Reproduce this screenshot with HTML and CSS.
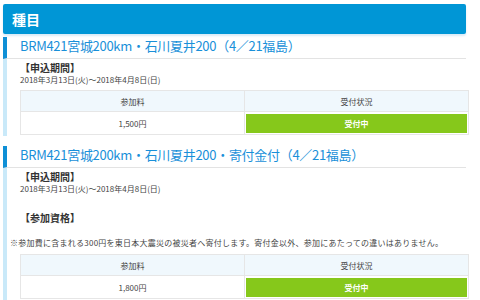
FILE: index.html
```html
<!DOCTYPE html>
<html lang="ja">
<head>
  <meta charset="UTF-8">
  <title>種目</title>
  <link rel="stylesheet" href="styles.css">
</head>
<body>
  <div class="page">
    <h1 class="box-title">種目</h1>

    <div class="event">
      <h2 class="event-name">BRM421宮城200km・石川夏井200（4／21福島）</h2>
      <div class="event-body">
        <p class="label">【申込期間】</p>
        <p class="period">2018年3月13日(火)～2018年4月8日(日)</p>
        <table class="fee">
          <tr><th>参加料</th><th>受付状況</th></tr>
          <tr><td>1,500円</td><td class="status"><span>受付中</span></td></tr>
        </table>
      </div>
    </div>

    <div class="event">
      <h2 class="event-name">BRM421宮城200km・石川夏井200・寄付金付（4／21福島）</h2>
      <div class="event-body">
        <p class="label">【申込期間】</p>
        <p class="period">2018年3月13日(火)～2018年4月8日(日)</p>
        <p class="label label-gap">【参加資格】</p>
        <p class="note">※参加費に含まれる300円を東日本大震災の被災者へ寄付します。寄付金以外、参加にあたっての違いはありません。</p>
        <table class="fee">
          <tr><th>参加料</th><th>受付状況</th></tr>
          <tr><td>1,800円</td><td class="status"><span>受付中</span></td></tr>
        </table>
      </div>
    </div>
  </div>
</body>
</html>
```

FILE: styles.css
```css
body {
  margin: 0;
  font-family: "Noto Sans CJK JP", "Noto Sans", sans-serif;
  background-color: #fff;
  color: #333;
}

p {
  margin: 0;
}

.page {
  padding: 4px 14px 0 3px;
}

.box-title {
  margin: 0;
  height: 30px;
  line-height: 30px;
  padding-left: 9px;
  background-color: #0096d6;
  color: #fff;
  font-size: 14px;
  font-weight: bold;
  border-radius: 2px;
  box-shadow: 0 2px 2px rgba(0, 120, 200, 0.15);
}

.event {
  margin-top: 3px;
  border-left: 4px solid #c9e9f9;
  margin-right: -3px;
}

.event + .event {
  margin-top: 10px;
}

.event-name {
  margin: 0 3px 0 -4px;
  padding: 0 0 4px 13px;
  border-left: 4px solid #0e8fd6;
  border-bottom: 1px solid #e3e3e3;
  color: #1990d9;
  font-size: 13px;
  font-weight: normal;
  line-height: 17px;
  letter-spacing: -0.3px;
}

.event-body {
  padding: 3px 0 1px 13px;
}

.label {
  font-size: 10px;
  font-weight: bold;
  line-height: 12px;
}

.label-gap {
  margin-top: 18px;
}

.period {
  font-size: 8px;
  line-height: 11px;
  color: #444;
}

.note {
  margin: 13px 0 3px -10px;
  font-size: 8px;
  line-height: 12px;
  letter-spacing: 0.25px;
  color: #444;
  white-space: nowrap;
}

.fee {
  margin-top: 5px;
  width: 100%;
  border-collapse: collapse;
  font-size: 8px;
  color: #444;
}

.fee th,
.fee td {
  width: 50%;
  height: 20px;
  padding: 0;
  text-align: center;
  border: 1px solid #e6e6e6;
  font-weight: normal;
}

.fee th {
  background-color: #f0f8fd;
}

.fee .status {
  padding: 1px;
}

.fee .status span {
  display: block;
  height: 19px;
  line-height: 19px;
  background-color: #86c81b;
  color: #fff;
  font-weight: bold;
}
```
